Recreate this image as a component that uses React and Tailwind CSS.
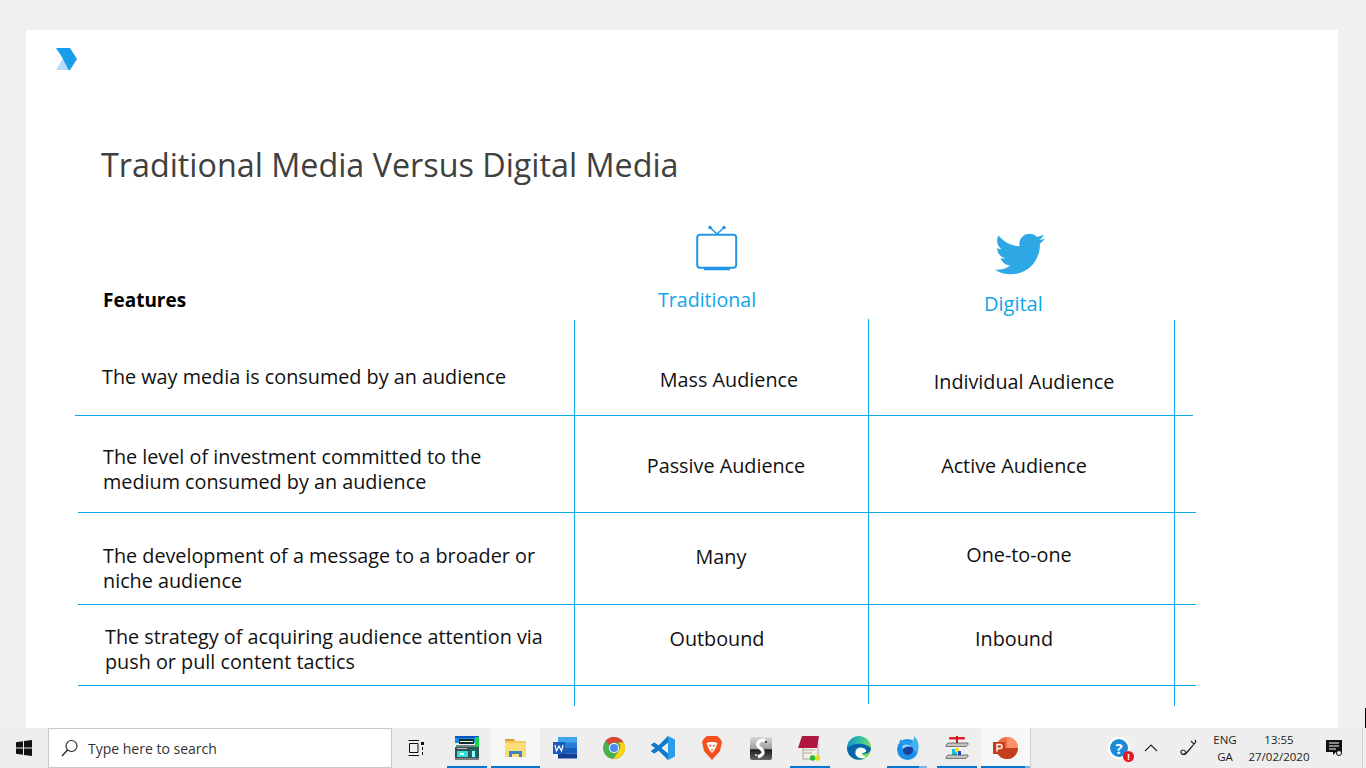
import React from "react";
import { FaTwitter } from "react-icons/fa";

const Logo = () => (
  <svg width="22" height="23" viewBox="0 0 22 23" className="block">
    <path d="M0 22 L7 10 L13 22 Z" fill="#b9dcf6" />
    <path d="M0 0 L14 0 L21 11 L14 22 L12.500 22 L6.500 10 Z" fill="#1a9cec" />
  </svg>
);

const Tv = () => (
  <svg width="42" height="46" viewBox="0 0 42 46" fill="none" className="block">
    <rect x="1.200" y="9.800" width="39" height="33" rx="3" stroke="#2196e8" strokeWidth="2" />
    <path d="M21 9 L14 2.500 M21 9 L28 2.500" stroke="#2196e8" strokeWidth="1.600" />
    <circle cx="14" cy="2.500" r="1.800" fill="#2196e8" />
    <circle cx="28" cy="2.500" r="1.800" fill="#2196e8" />
    <path d="M8 44 H34" stroke="#2196e8" strokeWidth="2.500" />
  </svg>
);

const rows = [
  {
    box: "ml-[49px] h-[95px]",
    cols: "grid-cols-[500px_294px_306px]",
    textBox: "pl-[27px] pt-[43px]",
    text: ["The way media is consumed by an audience"],
    a: "Mass Audience", aBox: "pl-[14px] pt-[46px]",
    b: "Individual Audience", bBox: "pl-[4px] pt-[48px]",
  },
  {
    box: "ml-[52px] h-[97px]",
    cols: "grid-cols-[497px_294px_306px]",
    textBox: "pl-[25px] pt-[28px]",
    text: ["The level of investment committed to the", "medium consumed by an audience"],
    a: "Passive Audience", aBox: "pl-[8px] pt-[37px]",
    b: "Active Audience", bBox: "pr-[16px] pt-[37px]",
  },
  {
    box: "ml-[52px] h-[92px]",
    cols: "grid-cols-[497px_294px_306px]",
    textBox: "pl-[25px] pt-[30px]",
    text: ["The development of a message to a broader or", "niche audience"],
    a: "Many", aBox: "pr-[2px] pt-[31px]",
    b: "One-to-one", bBox: "pr-[6px] pt-[29px]",
  },
  {
    box: "ml-[52px] h-[81px]",
    cols: "grid-cols-[497px_294px_306px]",
    textBox: "pl-[27px] pt-[19px]",
    text: ["The strategy of acquiring audience attention via", "push or pull content tactics"],
    a: "Outbound", aBox: "pr-[10px] pt-[21px]",
    b: "Inbound", bBox: "pr-[16px] pt-[21px]",
  },
];

const Store = () => (
  <svg width="24" height="24" viewBox="0 0 24 24" className="block" shapeRendering="crispEdges">
    <rect width="24" height="7" fill="#1a8fe0" />
    <rect x="0" y="0" width="24" height="2" fill="#0a55c8" />
    <rect x="20" y="1" width="4" height="16" fill="#14d24a" />
    <rect x="4" y="3" width="15" height="5" fill="#0b2f2c" />
    <rect x="5" y="5" width="13" height="1" fill="#e8f4f2" />
    <rect x="0" y="7" width="4" height="4" fill="#d9f5f0" />
    <rect x="1" y="9" width="19" height="4" fill="#6f8684" />
    <rect x="0" y="11" width="24" height="11" fill="#34504f" />
    <rect x="2" y="12" width="10" height="1" fill="#b0c0c0" />
    <rect x="2" y="15" width="11" height="6" fill="#35dce0" />
    <rect x="5" y="17" width="4" height="2" fill="#d8ffff" />
    <rect x="15" y="13" width="7" height="9" fill="#146a70" />
    <rect x="17" y="15" width="3" height="6" fill="#9ff" />
    <rect x="0" y="22" width="24" height="2" fill="#7e7e7e" />
  </svg>
);

const Folder = () => (
  <svg width="22" height="20" viewBox="0 0 22 20" className="block">
    <path d="M0 1 H9 L10 3 H2 V5 H0 Z" fill="#d6a130" />
    <rect x="0" y="3" width="21" height="16" fill="#fcdc78" />
    <rect x="0" y="3" width="21" height="2" fill="#f5cb5c" />
    <path d="M4 19 V13 H17 V19 H14 V16 H7 V19 Z" fill="#3a83c4" />
  </svg>
);

const Word = () => (
  <svg width="24" height="22" viewBox="0 0 24 22" className="block">
    <rect x="5" y="0" width="19" height="6" fill="#41a5ee" />
    <rect x="5" y="5.500" width="19" height="5.500" fill="#2b7cd3" />
    <rect x="5" y="11" width="19" height="5.500" fill="#185abd" />
    <rect x="5" y="16.500" width="19" height="5" fill="#103f91" />
    <rect x="0" y="5" width="12" height="12" fill="#185abd" />
    <path d="M2 8 L3.500 14 L6 9 L8.500 14 L10 8" stroke="#fff" strokeWidth="1.200" fill="none" />
  </svg>
);

const Chrome = () => (
  <svg width="22" height="22" viewBox="0 0 22 22" className="block">
    <circle cx="11" cy="11" r="11" fill="#4caf50" />
    <path d="M11 0 A11 11 0 0 1 20.500 5.500 L11 5.500 A5.500 5.500 0 0 0 6 8 L2.500 3.800 A11 11 0 0 1 11 0 Z" fill="#db4437" />
    <path d="M20.500 5.500 A11 11 0 0 1 10.500 22 L15.800 13.500 A5.500 5.500 0 0 0 15.500 5.500 Z" fill="#fcd116" />
    <circle cx="11" cy="11" r="5" fill="#fff" />
    <circle cx="11" cy="11" r="4" fill="#4a89f3" />
  </svg>
);

const Code = () => (
  <svg width="24" height="24" viewBox="0 0 24 24" className="block">
    <path d="M17 0 L24 3.500 V20.500 L17 24 Z" fill="#2a9fe8" />
    <path d="M17 0 V6.500 L7.500 14.500 L3 17.500 L0 15 L4.500 12 L0 9 L3 6.500 L7.500 9.500 Z" fill="#0b79c4" />
    <path d="M17 24 V17.500 L7.500 9.500 L3 6.500 L0 9 L4.500 12 L0 15 L3 17.500 L7.500 14.500 Z" fill="#0e7cc9" />
  </svg>
);

const Brave = () => (
  <svg width="20" height="24" viewBox="0 0 20 24" className="block">
    <path d="M5 0 H15 L18 2.500 L20 6 L18 15 L10 24 L2 15 L0 6 L2 2.500 Z" fill="#f4511e" />
    <path d="M4.500 7 L8 6 H12 L15.500 7 L14 11 L12.500 14 L10 17 L7.500 14 L6 11 Z" fill="#fff" />
    <path d="M7 9 L9 10.500 M13 9 L11 10.500 M9 14 H11" stroke="#f4511e" strokeWidth="1.200" />
  </svg>
);

const Scrivener = () => (
  <svg width="22" height="23" viewBox="0 0 22 23" className="block">
    <defs>
      <linearGradient id="scr" x1="0" y1="0" x2="0" y2="1">
        <stop offset="0" stopColor="#d8d8d8" />
        <stop offset="0.500" stopColor="#a0a0a0" />
        <stop offset="0.560" stopColor="#1c1c1c" />
        <stop offset="1" stopColor="#666" />
      </linearGradient>
    </defs>
    <rect width="22" height="23" rx="2" fill="url(#scr)" />
    <path d="M15 3 C7 3 6 8 10 11 C14 14 15 17 8 20" stroke="#fff" strokeWidth="3.200" fill="none" />
    <circle cx="16" cy="5" r="1" fill="#222" />
    <circle cx="6" cy="18" r="1" fill="#eee" />
  </svg>
);

const Notepad = () => (
  <svg width="24" height="25" viewBox="0 0 24 25" className="block">
    <rect x="5" y="8" width="15" height="15" fill="#f2efe2" stroke="#777" strokeWidth="0.600" />
    <path d="M5 7 H14 M5 14 H17 M5 17 H14" stroke="#999" strokeWidth="0.700" />
    <path d="M4 0 H21 L19 12 H0 Z" fill="#b0143f" />
    <path d="M6 0 V1 M10 0 V1 M14 0 V1 M18 0 V1" stroke="#555" />
    <circle cx="14.500" cy="22" r="2.700" fill="#22bb33" />
    <circle cx="19.500" cy="22" r="2.700" fill="#e6dc1e" />
  </svg>
);

const Edge = () => (
  <svg width="24" height="24" viewBox="0 0 24 24" className="block">
    <defs>
      <linearGradient id="edgeA" x1="0" y1="0" x2="1" y2="0.300">
        <stop offset="0" stopColor="#0e8bc9" />
        <stop offset="0.600" stopColor="#36c5a0" />
        <stop offset="1" stopColor="#7ddc5a" />
      </linearGradient>
    </defs>
    <circle cx="12" cy="12" r="12" fill="url(#edgeA)" />
    <path d="M0 12 C1 22 10 26 18 22 C12 24 7 20 8 15 C9 11 15 10 18 13 C20 16 17 17 15 17 C18 19 24 17 24 12 C20 8 8 5 0 12 Z" fill="#0c63ad" />
    <path d="M9 15 C10 11 16 11 19 14 C20 16 17 17 15 17 C14 18 16 20 19 21 C14 24 7 21 9 15 Z" fill="#fff" />
  </svg>
);

const Firefox = () => (
  <svg width="24" height="24" viewBox="0 0 24 24" className="block">
    <circle cx="11.500" cy="13.500" r="10.500" fill="#1f8ee6" />
    <path d="M18 0 C23 5 24 12 21 18 L14 8 C17 6 18 3 18 0 Z" fill="#3fb4f2" />
    <path d="M3 6 L5 3 L7 6 C10 4 13 4 15 6 L10 9 Z" fill="#2b9df0" />
    <circle cx="12" cy="14" r="5" fill="#1d3f9e" />
    <path d="M6 10 C9 8 14 8 16 11 C13 10 10 10 7 13 Z" fill="#8dd3fb" />
  </svg>
);

const Press = () => (
  <svg width="24" height="24" viewBox="0 0 24 24" className="block">
    <rect x="4" y="1" width="16" height="2.500" rx="1" fill="#e0202a" />
    <rect x="11" y="0" width="2" height="7" fill="#c01820" />
    <path d="M3 7 H23 V8.500 L21 10.500 H1 V9 Z" fill="#c4c4c4" stroke="#333" strokeWidth="0.600" />
    <rect x="7" y="11" width="10" height="8" fill="#f6f6f6" />
    <rect x="7" y="13" width="5" height="6" fill="#14c0d8" />
    <rect x="10" y="12" width="4" height="4" fill="#f0e020" />
    <rect x="13" y="15" width="3" height="4" fill="#2244cc" />
    <path d="M3 19 H23 V20.500 L21 22.500 H1 V21 Z" fill="#c4c4c4" stroke="#333" strokeWidth="0.600" />
  </svg>
);

const Ppt = () => (
  <svg width="25" height="22" viewBox="0 0 25 22" className="block">
    <circle cx="14" cy="11" r="11" fill="#ed6c47" />
    <path d="M14 11 H25 A11 11 0 0 1 3 11 Z" fill="#c43e1c" />
    <path d="M14 0 A11 11 0 0 1 25 11 H14 Z" fill="#ff8f6b" />
    <rect x="0" y="5" width="12" height="12" fill="#c43e1c" />
    <path d="M4 14.500 V7.500 H7 A2 2 0 0 1 7 11.500 H4" stroke="#fff" strokeWidth="1.400" fill="none" />
  </svg>
);

const apps = [
  { icon: <Store />, bar: "bg-[#0078d7] w-[40px] mx-auto" },
  { icon: <Folder />, box: "bg-[#f7f7f7]", bar: "bg-[#0078d7] w-full" },
  { icon: <Word /> },
  { icon: <Chrome /> },
  { icon: <Code /> },
  { icon: <Brave /> },
  { icon: <Scrivener /> },
  { icon: <Notepad />, bar: "bg-[#0078d7] w-[40px] mx-auto" },
  { icon: <Edge /> },
  { icon: <Firefox />, bar: "bg-[#0078d7] w-[32px] ml-[4px]", extra: "w-[8px] bg-[#79b3e4]" },
  { icon: <Press />, bar: "bg-[#0078d7] w-[40px] mx-auto" },
  { icon: <Ppt />, box: "bg-[#f7f7f7]", bar: "bg-[#0078d7] w-[44px]", extra: "w-[5px] bg-[#79b3e4]" },
];

export default function App() {
  return (
    <div className="relative w-[1366px] h-[768px] overflow-hidden flex flex-col bg-[#f0f0f0] font-['Open_Sans',sans-serif]">
      <div className="absolute right-0 top-[708px] w-[1px] h-[20px] bg-black" />
      <div className="h-[728px] pt-[30px] pl-[26px]">
        <div className="relative w-[1312px] h-[698px] bg-white">
          <div className="pt-[18px] pl-[30px] h-[108px]">
            <Logo />
          </div>
          <h1 className="pl-[75px] pt-[1px] text-[32.300px] leading-[50px] text-[#404040] h-[62px]">Traditional Media Versus Digital Media</h1>

          <div className="h-[121px] grid grid-cols-[549px_294px_306px]">
            <div className="pl-[77px] pt-[86px] text-[19px] leading-[28px] font-bold text-black">Features</div>
            <div className="pl-[121px] flex flex-col items-start pt-[25px]">
              <Tv />
              <div className="-ml-[38px] mt-[15px] text-[19.600px] leading-[28px] text-[#0ea5e9] w-[100px] whitespace-nowrap">Traditional</div>
            </div>
            <div className="flex flex-col items-start pl-[126px]">
              <FaTwitter className="w-[50px] h-[50px] text-[#2ea8e4] mt-[29px]" />
              <div className="-ml-[11px] mt-[11px] text-[20px] leading-[28px] text-[#0ea5e9]">Digital</div>
            </div>
          </div>

          {rows.map((r) => (
            <div key={r.text[0]} className={`${r.box} w-[1118px] border-b border-[#0ea5e9]`}>
              <div className={`grid h-full text-[19.800px] leading-[25px] text-[#111] ${r.cols}`}>
                <div className={r.textBox}>
                  {r.text.map((t) => (
                    <div key={t} className="whitespace-nowrap">{t}</div>
                  ))}
                </div>
                <div className={`${r.aBox} text-center whitespace-nowrap`}>{r.a}</div>
                <div className={`${r.bBox} text-center whitespace-nowrap`}>{r.b}</div>
              </div>
            </div>
          ))}

          <div className="absolute left-[548px] top-[290px] w-px h-[386px] bg-[#0ea5e9]" />
          <div className="absolute left-[842px] top-[289px] w-px h-[385px] bg-[#0ea5e9]" />
          <div className="absolute left-[1148px] top-[290px] w-px h-[386px] bg-[#0ea5e9]" />
        </div>
      </div>

      <div className="h-[40px] flex items-stretch bg-[#eeeeee] text-[#222]">
        <div className="w-[48px] flex items-center justify-center">
          <svg width="16" height="16" viewBox="0 0 16 16" className="block">
            <path d="M0 2.300 L7 1.300 V7.500 H0 Z M8 1.100 L16 0 V7.500 H8 Z M0 8.500 H7 V14.700 L0 13.700 Z M8 8.500 H16 V16 L8 14.900 Z" fill="#111" />
          </svg>
        </div>
        <div className="w-[344px] h-[40px] bg-white border border-[#c9c9c9] flex items-center pl-[12px]">
          <svg width="18" height="18" viewBox="0 0 18 18" fill="none" className="block">
            <circle cx="10.500" cy="7" r="5.500" stroke="#222" strokeWidth="1.100" />
            <path d="M6.500 11 L1 17" stroke="#222" strokeWidth="1.300" />
          </svg>
          <span className="ml-[9px] text-[14px] text-[#333]">Type here to search</span>
        </div>
        <div className="w-[50px] pr-[2px] flex items-center justify-center">
          <svg width="16" height="16" viewBox="0 0 16 16" fill="none" className="block">
            <path d="M0.500 0.500 H11 M0.500 15.500 H11 M1.500 3.500 H10 V12.500 H1.500 Z" stroke="#111" />
            <rect x="13" y="2" width="3" height="3" fill="#111" />
            <path d="M14.500 7 V10 M14.500 12 V15" stroke="#111" />
          </svg>
        </div>
        {apps.map((a, i) => (
          <div key={i} className={`w-[49px] relative flex items-center justify-center ${a.box || ""}`}>
            {a.icon}
            {a.bar && (
              <div className="absolute left-0 right-0 bottom-0 h-[2px] flex">
                <div className={`${a.bar} h-[2px]`} />
                {a.extra && <div className={`${a.extra} h-[2px]`} />}
              </div>
            )}
          </div>
        ))}
        <div className="w-[1px] bg-[#cfcfcf]" />
        <div className="flex-1 flex items-center">
          <div className="relative ml-[77px] w-[22px] h-[22px] rounded-full bg-[#1c8ad8] border-2 border-white flex items-center justify-center text-white font-bold text-[15px] leading-none">
            ?
            <div className="absolute -right-[6px] -bottom-[5px] w-[11px] h-[11px] rounded-full bg-[#e01b24] flex items-center justify-center text-[9px] leading-none text-white">!</div>
          </div>
          <svg width="14" height="8" viewBox="0 0 14 8" fill="none" className="ml-[14px] block">
            <path d="M1 7 L7 1 L13 7" stroke="#222" strokeWidth="1.100" />
          </svg>
          <svg width="18" height="18" viewBox="0 0 18 18" fill="none" className="ml-[21px] block">
            <path d="M16 1 C17 2 17 3 16 4 L8 13 C6 15 4 16 3 15 C1 13 2 11 4 11 C6 11 7 13 6.500 15 C8 14 12 9 15 5 L12 2" stroke="#222" strokeWidth="1.100" />
          </svg>
          <div className="ml-[13px] w-[30px] text-center text-[11.500px] leading-[17px] text-[#222]">
            <div>ENG</div>
            <div>GA</div>
          </div>
          <div className="ml-[7px] w-[64px] text-center text-[11.500px] leading-[17px] text-[#222]">
            <div>13:55</div>
            <div className="whitespace-nowrap">27/02/2020</div>
          </div>
          <div className="ml-[15px] relative">
            <svg width="17" height="16" viewBox="0 0 17 16" className="block">
              <path d="M0 0 H16 V12 H10 L7 15 V12 H0 Z" fill="#111" />
              <path d="M3 3 H13 M3 6 H13 M3 9 H10" stroke="#fff" />
              <circle cx="13" cy="13" r="2.500" fill="#eee" stroke="#111" />
            </svg>
          </div>
          <div className="ml-[19px] w-[1px] h-[40px] bg-[#cfcfcf]" />
        </div>
      </div>
    </div>
  );
}
